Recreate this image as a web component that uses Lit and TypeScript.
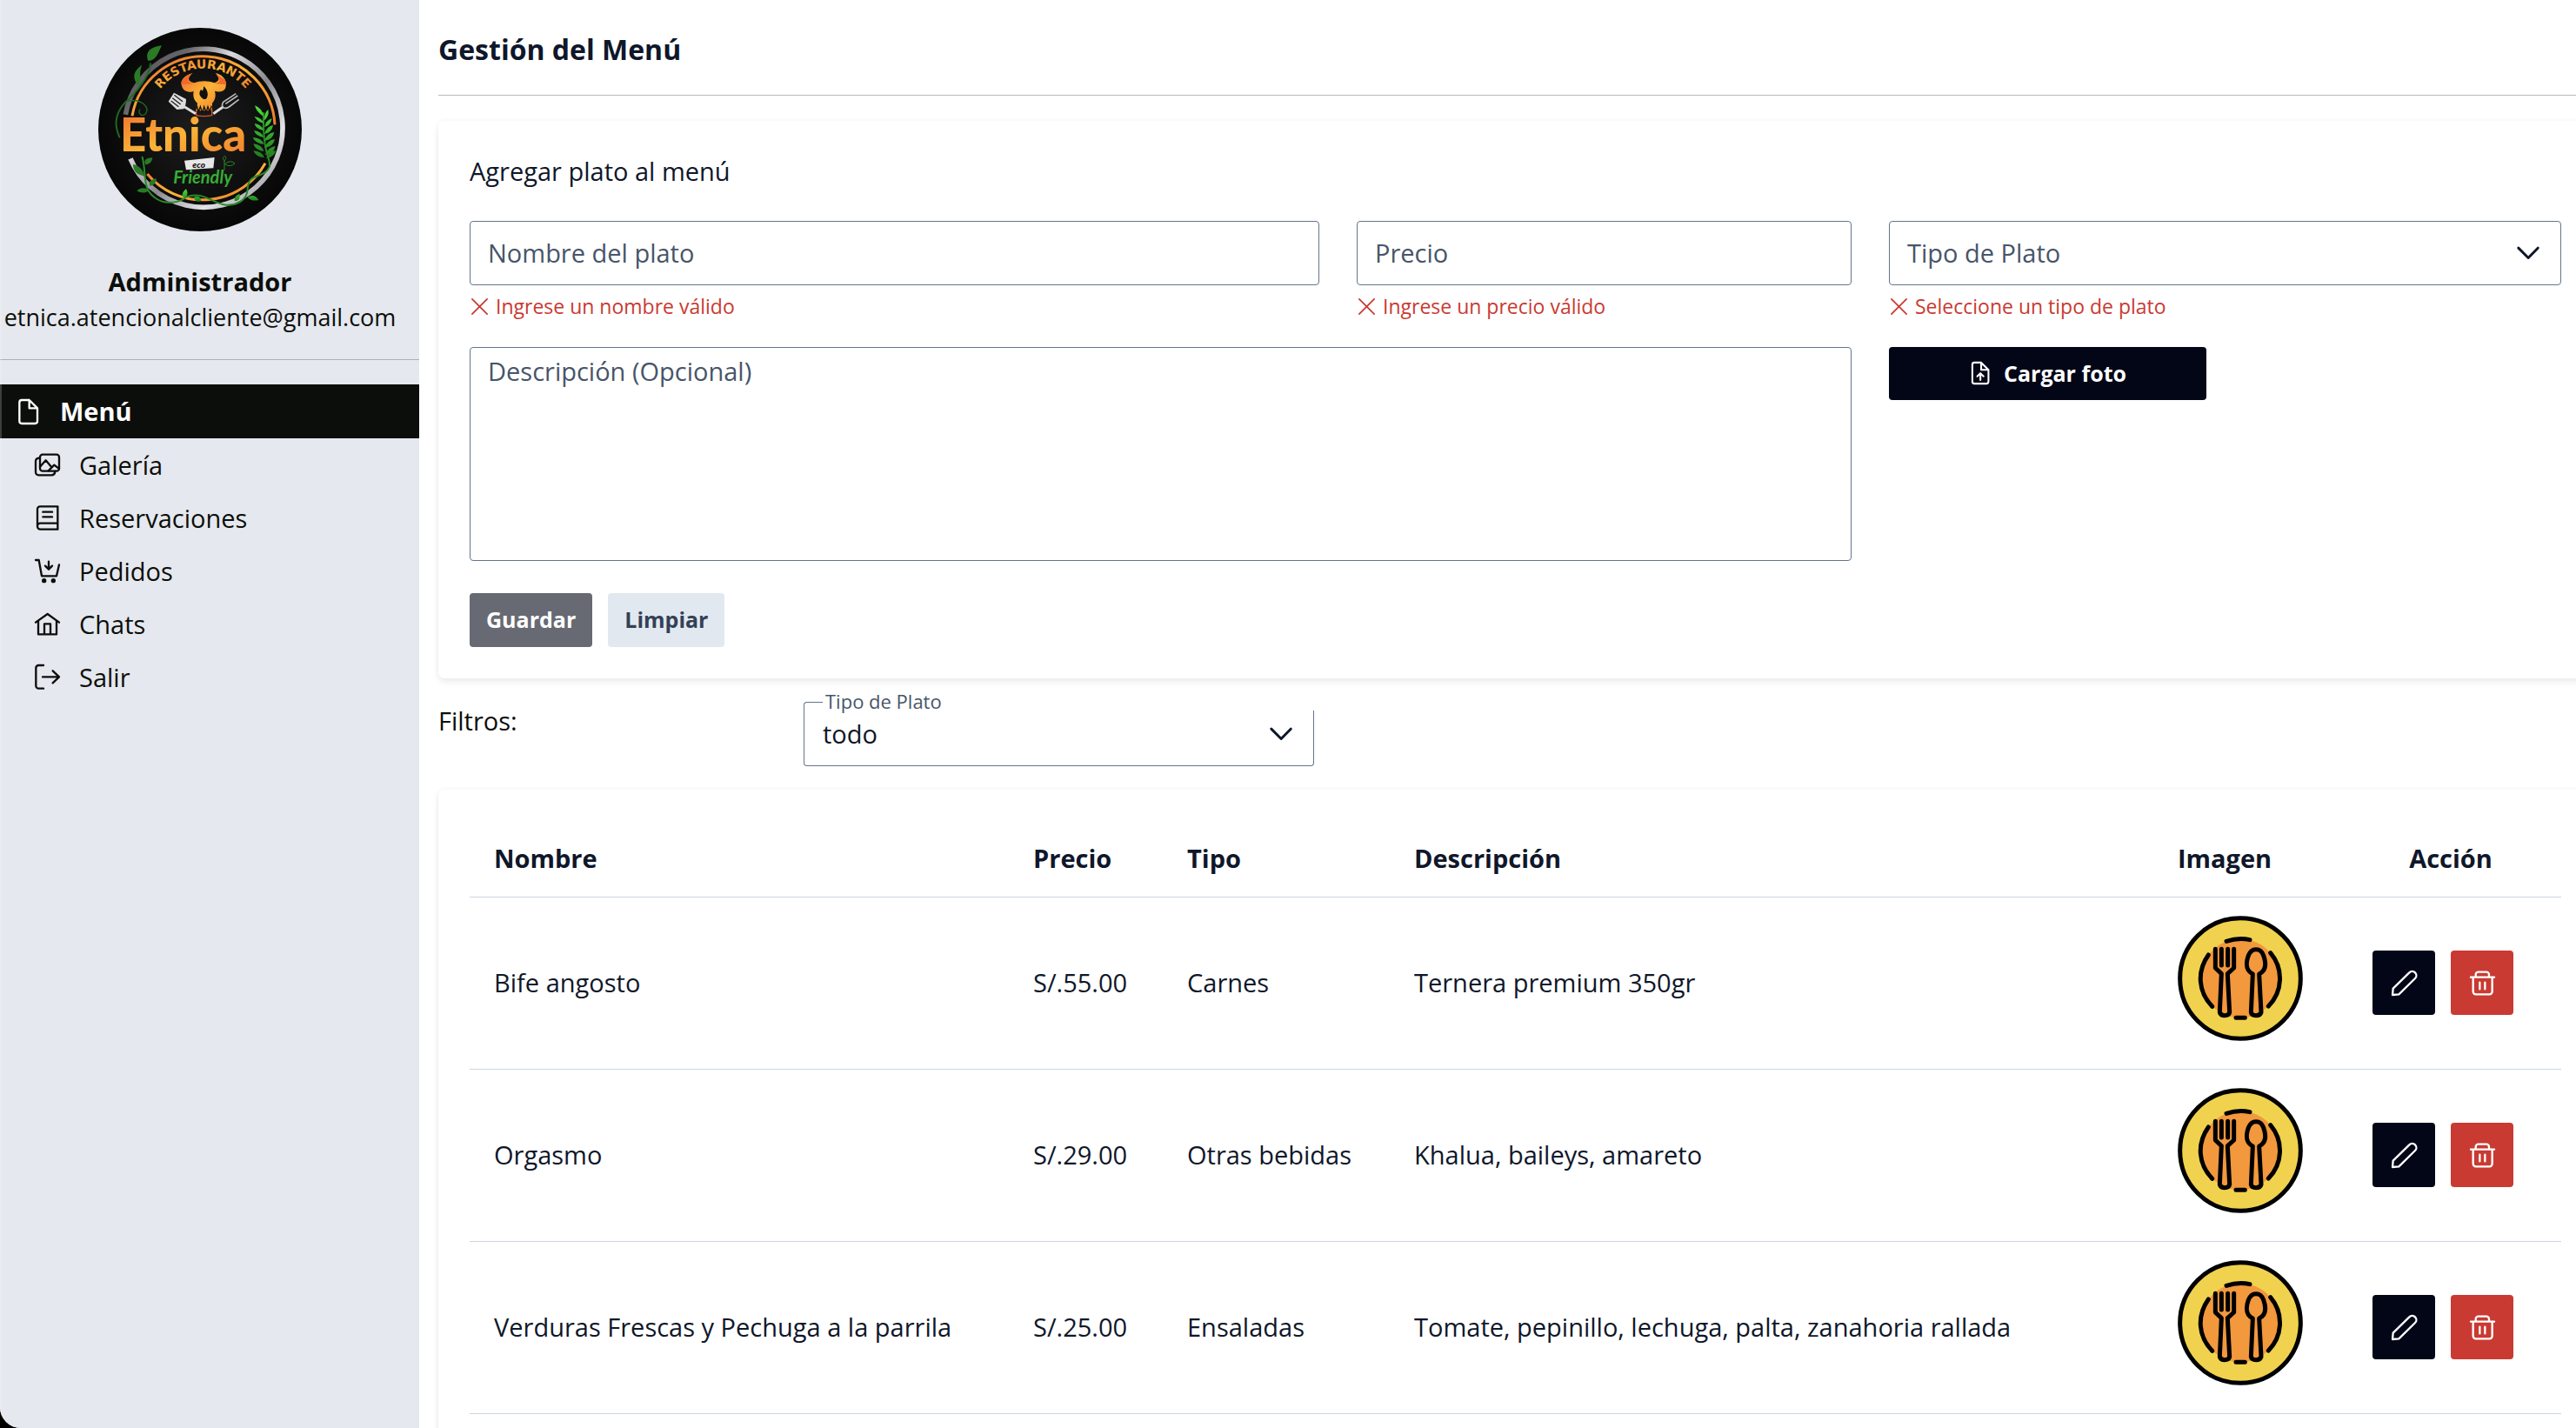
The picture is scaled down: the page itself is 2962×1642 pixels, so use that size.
import { LitElement, html, css, svg } from "lit";
import { customElement, property } from "lit/decorators.js";
import { classMap } from "lit/directives/class-map.js";

const FONT = css`"Open Sans", "Noto Sans", sans-serif`;

/* Outline icons, drawn on an 87-unit grid. */
const ICONS: Record<string, unknown> = {
  file: svg`<path d="M46 3H21a8 8 0 0 0-8 8v65a8 8 0 0 0 8 8h46a8 8 0 0 0 8-8V31L47 3v28h28"/>`,
  images: svg`<rect x="18" y="8" width="66" height="57" rx="9"/><path d="M17 20C8 20 3 23 3 31v37a10 10 0 0 0 10 11h45c8 0 11-4 12-13M18 50l20-22 17 20M47 64l20-20 17 13"/>`,
  book: svg`<path d="M79 4H18a9 9 0 0 0-9 9v60a10 10 0 0 0 10 10h60zM79 62H19a10 10 0 0 0-10 10M28 23h32M28 40h32"/>`,
  cart: svg`<path d="M3 6h11l10 55h51l9-39M48 11v26M36 26l12 12 12-12"/><circle class="dot" cx="32" cy="77" r="8"/><circle class="dot" cx="64" cy="77" r="8"/>`,
  home: svg`<path d="M3 38L44 9l40 29M12 33v46h63V33M33 79V43h21v36"/>`,
  exit: svg`<path d="M30 3H13a9 9 0 0 0-9 9v62a9 9 0 0 0 9 9h17M27 43h57M62 22l22 21-22 21"/>`,
  pencil: svg`<path d="M3 84l2-22L61 7a14 14 0 0 1 20 20L25 82z"/>`,
  trash: svg`<path d="M3 23h81M20 22v-8a9 9 0 0 1 9-9h28a9 9 0 0 1 9 9v8M11 23v50a9 9 0 0 0 9 9h48a9 9 0 0 0 9-9V23M34 41v23M52 41v23"/>`,
  upload: svg`<path d="M46 3H21a8 8 0 0 0-8 8v65a8 8 0 0 0 8 8h46a8 8 0 0 0 8-8V31L47 3v28h28M44 70V46M32 56l12-12 12 12"/>`,
  cross: svg`<path d="M4 4l79 79M83 4L4 83"/>`,
  chevron: svg`<path d="M6 24l38 38 37-38"/>`,
};

@customElement("ui-icon")
class UiIcon extends LitElement {
  @property() name = "file";
  static styles = css`
    :host { display: inline-flex; width: 29px; height: 29px; flex: none; }
    svg { width: 100%; height: 100%; fill: none; stroke: currentColor; stroke-width: var(--stroke, 7); stroke-linecap: round; stroke-linejoin: round; overflow: visible; }
    .dot { fill: currentColor; stroke: none; }
  `;
  render() {
    return html`<svg viewBox="0 0 87 87" aria-hidden="true">${ICONS[this.name]}</svg>`;
  }
}

@customElement("plate-image")
class PlateImage extends LitElement {
  static styles = css`
    :host { display: block; width: 144px; height: 144px; }
    svg { display: block; width: 100%; height: 100%; fill: none; stroke: #000; stroke-linecap: round; stroke-linejoin: round; }
  `;
  render() {
    return html`<svg viewBox="72 39 432 432" role="img" aria-label="Plato">
      <circle cx="288" cy="255" r="208" fill="#f0d24f" stroke-width="15"/>
      <circle cx="288" cy="255" r="136" fill="#f2983d" stroke="none"/>
      <g stroke-width="15">
        <path d="M240 127Q282 113 321 122M392 167C438 222 435 300 385 351M273 391H304M191 352C143 302 137 232 178 174"/>
        <path d="M202 154V219L223 239L217 372Q220 383 234 383Q249 383 251 372L244 239L266 219V154M223 154V210M245 154V210"/>
        <path d="M331 240C305 226 307 202 316 176C326 149 358 147 368 176C378 204 378 228 353 240L360 372Q357 383 342 383Q327 383 325 372Z"/>
      </g>
    </svg>`;
  }
}

@customElement("brand-logo")
class BrandLogo extends LitElement {
  static styles = css`
    :host { display: block; width: 234px; height: 234px; }
    svg { display: block; width: 100%; height: 100%; }
    text { font-family: "Lato", sans-serif; font-weight: 900; }
    .arc { font-family: "DejaVu Sans", sans-serif; font-weight: 700; font-size: 42px; text-anchor: middle; }
    .name { font-size: 158px; }
    .eco { font-size: 30px; font-style: italic; fill: #111; }
    .friendly { font-weight: 700; font-style: italic; font-size: 60px; fill: #37ad35; }
  `;
  render() {
    return html`<svg viewBox="69 66 702 702" role="img" aria-label="Restaurante Etnica Eco Friendly">
      <defs>
        <linearGradient id="steel" x1="0" y1="0" x2="1" y2="1">
          <stop offset="0" stop-color="#4b4b50"/><stop offset=".2" stop-color="#66666b"/><stop offset=".35" stop-color="#d9d9de"/>
          <stop offset=".55" stop-color="#8a8a91"/><stop offset=".75" stop-color="#e4e4e8"/><stop offset="1" stop-color="#77777c"/>
        </linearGradient>
        <linearGradient id="fire" x1="0" y1="0" x2="1" y2="1">
          <stop offset="0" stop-color="#ef6a2c"/><stop offset=".5" stop-color="#fbb437"/><stop offset="1" stop-color="#ef7a2c"/>
        </linearGradient>
        <linearGradient id="leaf" x1="0" y1="0" x2="0" y2="1">
          <stop offset="0" stop-color="#4be03a"/><stop offset="1" stop-color="#1f7a1e"/>
        </linearGradient>
        <radialGradient id="coal"><stop offset="0" stop-color="#1d1d1d"/><stop offset="1" stop-color="#060706"/></radialGradient>
        <path id="arc" d="M266 302A188 188 0 0 1 594 302"/>
      </defs>
      <circle cx="420" cy="417" r="351" fill="url(#coal)"/>
      <g fill="none">
        <path d="M163 365A273 273 0 1 1 180 517" stroke="url(#steel)" stroke-width="17"/>
        <path d="M186 370A248 248 0 0 1 678 400" stroke="url(#fire)" stroke-width="9"/>
        <path d="M238 570A248 248 0 0 0 645 533" stroke="url(#fire)" stroke-width="9"/>
      </g>
      <text class="arc" fill="url(#fire)"><textPath href="#arc" startOffset="50%">RESTAURANTE</textPath></text>
      <path fill="url(#fire)" d="M395 222C360 232 352 250 357 266C362 288 388 290 398 284C394 306 402 318 411 326L408 352H462L462 326C471 316 476 304 471 284C490 290 508 284 509 268C512 246 502 230 474 221C489 240 488 249 470 256C448 248 420 248 400 256C376 252 376 238 395 222Z"/>
      <path d="M432 312C414 300 416 288 424 278C428 288 431 282 433 267C446 280 452 300 440 312Z" fill="#111"/>
      <path d="M407 347V368Q434 374 461 368V347" fill="none" stroke="#d8502a" stroke-width="4"/>
      <path d="M409 335L415 356L421 338L428 360L434 338L441 358L447 338L453 356L460 335" fill="none" stroke="#111" stroke-width="4"/>
      <path d="M311 320L330 290L372 312Q372 334 364 346L340 348Z" fill="#ddd"/>
      <path d="M320 318L346 338M325 308L353 330M331 298L360 320" stroke="#222" stroke-width="4"/>
      <path d="M366 338L405 362M466 362L500 338" stroke="#ddd" stroke-width="9"/>
      <path d="M544 293L500 322Q492 336 502 342Q512 346 524 336L554 313M508 328L550 300" fill="none" stroke="#bbb" stroke-width="5"/>
      <text class="name" x="144" y="491" fill="url(#fire)">Etnica</text>
      <path d="M366 524L470 513L466 550L372 556Z" fill="#e8e8e8"/>
      <text class="eco" x="394" y="549">eco</text>
      <text class="friendly" x="328" y="602">Friendly</text>
      <g fill="none" stroke="#2a8a28" stroke-width="6" stroke-linecap="round">
        <path d="M249 190C248 230 200 290 160 325C120 370 128 410 142 443" stroke="#1f6a20"/>
        <path d="M172 318C220 310 246 340 233 362C218 376 206 360 212 348" stroke="#1f6a20" stroke-width="4"/>
        <path d="M221 512C236 570 220 620 262 650C300 680 350 668 372 650C430 626 460 672 510 677C560 680 584 650 584 620C590 560 640 590 660 545C664 510 636 510 639 360"/>
        <path d="M504 556V524M506 536C520 522 534 528 540 534C530 544 514 544 506 536ZM504 524C496 518 500 510 506 508C512 514 510 520 504 524Z" stroke-width="3"/>
      </g>
      <g fill="#2a7a26">
        <path d="M288 127C240 134 232 154 241 180C270 180 276 150 288 127Z"/>
        <path d="M220 194C190 214 184 236 206 266C222 246 206 224 220 194Z"/>
        <path d="M256 514C232 514 224 526 232 538C250 536 254 526 256 514Z"/>
        <path d="M189 536C188 560 204 574 228 576C224 552 208 542 189 536ZM270 586C246 590 242 602 248 612C264 608 268 600 270 586ZM202 628C216 614 236 618 244 628C230 638 214 636 202 628Z"/>
      </g>
      <g fill="url(#leaf)">
        <path d="M372 622C354 636 358 648 366 654C380 644 378 634 372 622ZM398 650Q420 640 424 662Q406 672 398 650ZM556 638Q534 648 540 664Q562 662 556 638ZM584 650Q608 636 622 660Q598 666 584 650Z"/>
        <path d="M639 372Q614 356 609 334Q636 344 639 372ZM641 386Q640 360 655 348Q660 370 641 386ZM640 396Q614 388 608 372Q634 376 640 396ZM642 408Q648 384 668 378Q664 402 642 408ZM640 420Q612 416 608 396Q634 400 640 420ZM642 432Q650 406 672 402Q668 428 642 432ZM640 444Q612 440 606 420Q634 424 640 444ZM642 456Q650 430 676 426Q670 454 642 456ZM640 468Q610 464 602 444Q634 446 640 468ZM642 480Q652 454 678 450Q672 478 642 480ZM640 492Q610 488 604 466Q634 470 640 492ZM644 504Q654 478 680 474Q674 502 644 504ZM642 514Q612 512 604 490Q634 492 642 514ZM648 516Q660 490 682 490Q674 514 648 516Z"/>
      </g>
      <path d="M356 262C350 242 376 238 392 222C376 244 370 254 400 258ZM510 262C514 240 490 238 472 222C490 244 496 254 466 258Z" fill="#ef6a2c"/>
    </svg>`;
  }
}

interface Dish { name: string; price: string; type: string; description: string; }

const DISHES: Dish[] = [
  { name: "Bife angosto", price: "S/.55.00", type: "Carnes", description: "Ternera premium 350gr" },
  { name: "Orgasmo", price: "S/.29.00", type: "Otras bebidas", description: "Khalua, baileys, amareto" },
  { name: "Verduras Frescas y Pechuga a la parrila", price: "S/.25.00", type: "Ensaladas", description: "Tomate, pepinillo, lechuga, palta, zanahoria rallada" },
];

const NAV = [
  { icon: "file", label: "Menú", active: true },
  { icon: "images", label: "Galería", active: false },
  { icon: "book", label: "Reservaciones", active: false },
  { icon: "cart", label: "Pedidos", active: false },
  { icon: "home", label: "Chats", active: false },
  { icon: "exit", label: "Salir", active: false },
];

@customElement("app-root")
class AppRoot extends LitElement {
  static styles = css`
    :host { display: block; background: #000; font-family: ${FONT}; font-size: 29px; line-height: 40px; color: #0f172a; }
    * { box-sizing: border-box; }
    h1, h2, p, ul { margin: 0; padding: 0; }
    button, input, select, textarea { font: inherit; color: inherit; }

    .shell { position: relative; display: flex; height: 100vh; overflow: hidden; background: #fff; border-bottom-left-radius: 24px; }
    .shell::after { content: ""; position: absolute; inset: 0 auto 0 0; width: 2px; background: rgba(255, 255, 255, 0.2); }

    .sidebar { flex: none; width: 482px; background: #e5e8ee; color: #0c0e0b; }
    .profile { display: flex; flex-direction: column; align-items: center; padding: 32px 22px 28px 0; border-bottom: 1px solid #adb1b6; }
    .role { margin-top: 38px; font-size: 29px; font-weight: 700; line-height: 40px; }
    .email { font-size: 27px; line-height: 41px; white-space: nowrap; }
    .nav { list-style: none; padding-top: 28px; }
    .link { display: flex; align-items: center; gap: 22px; height: 61px; padding-left: 40px; color: inherit; text-decoration: none; }
    .link.active { height: 62px; padding-left: 18px; background: #0c0e0b; color: #fff; font-weight: 700; }

    .main { flex: 1; min-width: 0; padding-left: 22px; }
    .title { padding: 36px 0 32px; font-size: 32px; line-height: 41px; font-weight: 700; border-bottom: 1px solid #b7babd; }
    .card { margin-right: -19px; padding: 36px; border-radius: 7px; background: #fff; box-shadow: 0 4px 8px rgba(0, 0, 0, 0.07), 0 0 6px rgba(0, 0, 0, 0.04); }
    .form { margin-top: 29px; }
    .subtitle { padding: 2px 0 37px; font-size: 29px; line-height: 40px; font-weight: 400; }
    .grid { display: grid; grid-template-columns: repeat(12, minmax(0, 1fr)); column-gap: 43px; align-items: start; }
    .c5 { grid-column: span 5; }
    .c3 { grid-column: span 3; }
    .c4 { grid-column: span 4; }
    .c8 { grid-column: span 8; }

    .box { position: relative; }
    .box > label { position: absolute; left: 21px; top: 17px; color: #475569; pointer-events: none; }
    .input { display: block; width: 100%; height: 74px; padding: 0 21px; border: 1px solid #64748b; border-radius: 4px; background: none; appearance: none; outline: none; }
    textarea.input { height: 246px; padding: 8px 21px; resize: none; }
    .box.area > label { top: 8px; }
    .chevron { position: absolute; right: 25px; top: 24px; width: 26px; height: 26px; --stroke: 10; pointer-events: none; }
    .error { display: flex; align-items: center; gap: 9px; height: 71px; padding: 0 2px 23px; font-size: 23px; line-height: 32px; color: #c93a32; }
    .error ui-icon { width: 19px; height: 19px; --stroke: 8; }

    .btn { display: inline-flex; align-items: center; justify-content: center; height: 62px; padding: 0 19px 2px; border: 0; border-radius: 4px; font-size: 25px; line-height: 36px; font-weight: 700; }
    .upload { width: 365px; height: 61px; gap: 14px; background: #020617; color: #fff; }
    .upload ui-icon { width: 26px; height: 26px; }
    .actions { display: flex; gap: 18px; padding-top: 37px; }
    .save { background: #676a73; color: #fff; }
    .clear { background: #e2e8f0; color: #334155; }

    .filters { display: flex; align-items: flex-start; padding: 27px 0; color: #0c0e0b; }
    .filters-label { width: 420px; padding-top: 2px; }
    .notched { position: relative; width: 587px; height: 74px; color: #0f172a; }
    .notched::before { content: ""; position: absolute; left: 0; top: 0; width: 21px; height: 20px; border: solid #64748b; border-width: 1px 0 0 1px; border-top-left-radius: 4px; }
    .notched::after { content: ""; position: absolute; inset: 10px 0 0 0; border: solid #64748b; border-width: 0 1px 1px 1px; border-radius: 0 0 4px 4px; pointer-events: none; }
    .notched > label { position: absolute; left: 25px; top: -17px; font-size: 22px; line-height: 32px; color: #475569; }
    .notched select { width: 100%; height: 74px; padding: 0 22px; border: 0; background: none; appearance: none; outline: none; }

    .table { width: 100%; border-collapse: collapse; table-layout: fixed; }
    th, td { padding: 0 28px; border-bottom: 1px solid #cbd5e1; text-align: left; }
    th { height: 87px; font-weight: 700; }
    td { height: 198px; }
    .w-name { width: 620px; } .w-price { width: 177px; } .w-type { width: 261px; } .w-image { width: 215px; } .w-action { width: 254px; }
    .action { text-align: center; }
    .picture { vertical-align: top; padding-top: 21px; }
    .tools { display: flex; justify-content: center; gap: 18px; padding-right: 18px; }
    .tool { display: flex; align-items: center; justify-content: center; width: 72px; height: 74px; padding: 0; border: 0; border-radius: 4px; background: #020617; color: #fff; }
    .tool.delete { background: #c93a32; }
  `;

  private error(text: string) {
    return html`<p class="error"><ui-icon name="cross"></ui-icon>${text}</p>`;
  }

  render() {
    return html`
      <div class="shell">
        <aside class="sidebar">
          <div class="profile">
            <brand-logo></brand-logo>
            <p class="role">Administrador</p>
            <p class="email">etnica.atencionalcliente@gmail.com</p>
          </div>
          <nav><ul class="nav">
            ${NAV.map((n) => html`<li><a href="#" class=${classMap({ link: true, active: n.active })}><ui-icon name=${n.icon}></ui-icon>${n.label}</a></li>`)}
          </ul></nav>
        </aside>
        <main class="main">
          <h1 class="title">Gestión del Menú</h1>
          <form class="card form" @submit=${(e: Event) => e.preventDefault()}>
            <h2 class="subtitle">Agregar plato al menú</h2>
            <div class="grid">
              <div class="c5"><div class="box"><input class="input" id="name" type="text"><label for="name">Nombre del plato</label></div>${this.error("Ingrese un nombre válido")}</div>
              <div class="c3"><div class="box"><input class="input" id="price" type="text"><label for="price">Precio</label></div>${this.error("Ingrese un precio válido")}</div>
              <div class="c4"><div class="box"><select class="input" id="type"><option value=""></option></select><label for="type">Tipo de Plato</label><ui-icon class="chevron" name="chevron"></ui-icon></div>${this.error("Seleccione un tipo de plato")}</div>
              <div class="c8 box area"><textarea class="input" id="description"></textarea><label for="description">Descripción (Opcional)</label></div>
              <div class="c4"><button class="btn upload" type="button"><ui-icon name="upload"></ui-icon>Cargar foto</button></div>
            </div>
            <div class="actions">
              <button class="btn save" type="submit">Guardar</button>
              <button class="btn clear" type="button">Limpiar</button>
            </div>
          </form>
          <div class="filters">
            <span class="filters-label">Filtros:</span>
            <div class="notched"><select id="filter"><option>todo</option></select><label for="filter">Tipo de Plato</label><ui-icon class="chevron" name="chevron"></ui-icon></div>
          </div>
          <section class="card">
            <table class="table">
              <colgroup><col class="w-name"><col class="w-price"><col class="w-type"><col><col class="w-image"><col class="w-action"></colgroup>
              <thead><tr><th>Nombre</th><th>Precio</th><th>Tipo</th><th>Descripción</th><th>Imagen</th><th class="action">Acción</th></tr></thead>
              <tbody>
                ${DISHES.map((d) => html`<tr>
                  <td>${d.name}</td><td>${d.price}</td><td>${d.type}</td><td>${d.description}</td>
                  <td class="picture"><plate-image></plate-image></td>
                  <td><div class="tools">
                    <button class="tool" type="button" aria-label="Editar"><ui-icon name="pencil"></ui-icon></button>
                    <button class="tool delete" type="button" aria-label="Eliminar"><ui-icon name="trash"></ui-icon></button>
                  </div></td>
                </tr>`)}
              </tbody>
            </table>
          </section>
        </main>
      </div>
    `;
  }
}
